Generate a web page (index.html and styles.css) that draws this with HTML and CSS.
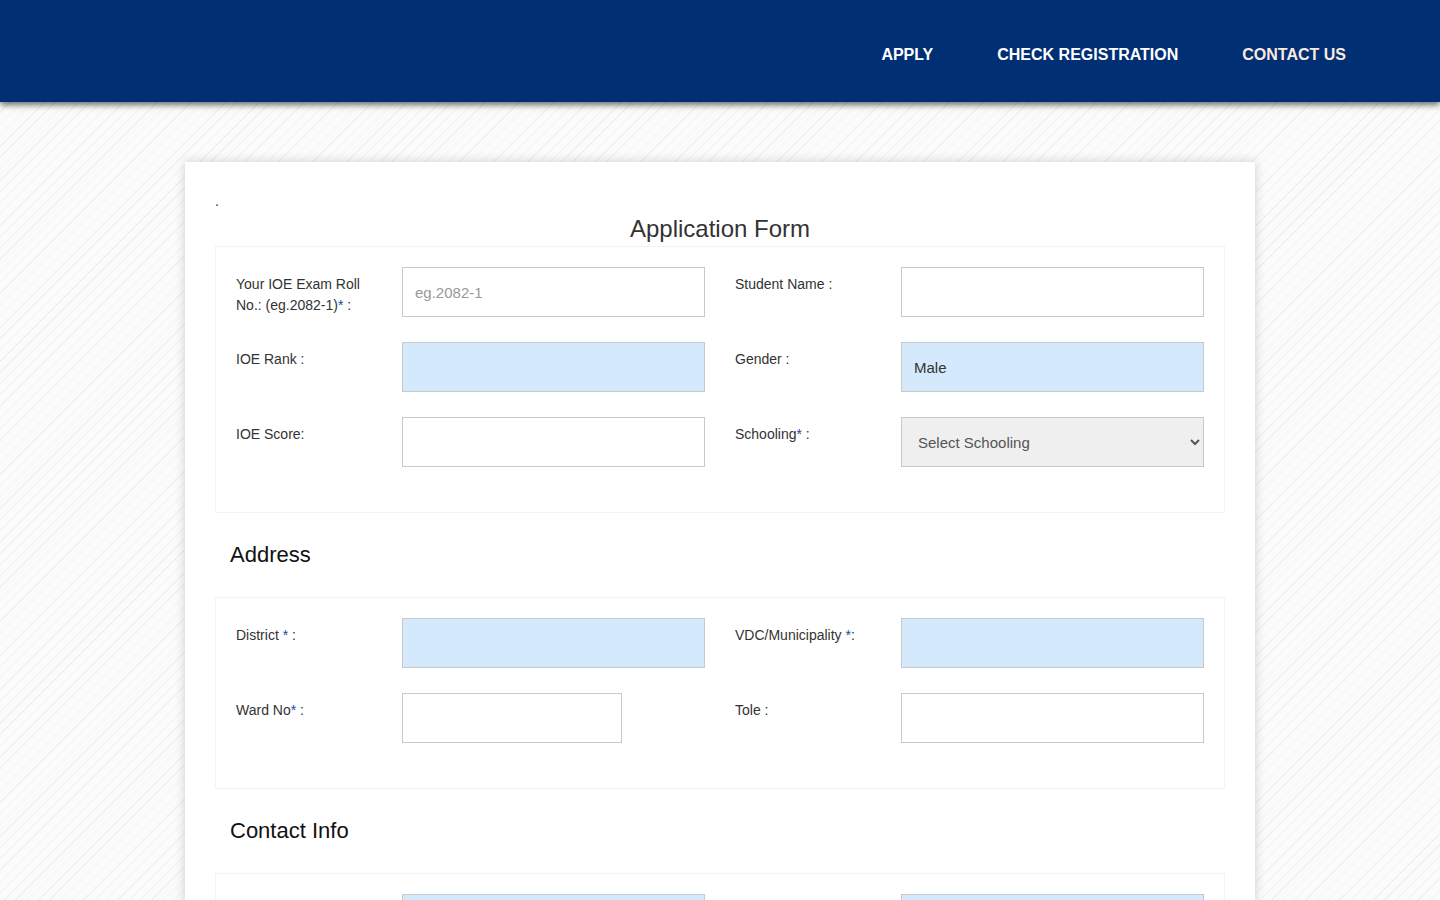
FILE: index.html
```html
<!DOCTYPE html>
<html lang="en">
<head>
    <meta charset="UTF-8">
    <meta name="viewport" content="width=device-width, initial-scale=1.0">
    <title>Application Form</title>
    <link rel="stylesheet" href="styles.css">
</head>
<body>
    <nav class="navbar">
        <div class="nav-links">
            <a href="#">APPLY</a>
            <a href="#">CHECK REGISTRATION</a>
            <a href="#" class="nav-contact">CONTACT US</a>
        </div>
    </nav>

    <main class="page">
        <div class="form-card">
            <p class="dot">.</p>
            <h2 class="form-title">Application Form</h2>

            <div class="form-section">
                <div class="form-row">
                    <div class="field">
                        <label>Your IOE Exam Roll No.: (eg.2082-1)<span class="req">*</span> :</label>
                        <input type="text" placeholder="eg.2082-1">
                    </div>
                    <div class="field">
                        <label>Student Name :</label>
                        <input type="text">
                    </div>
                </div>
                <div class="form-row">
                    <div class="field">
                        <label>IOE Rank :</label>
                        <input type="text" class="filled">
                    </div>
                    <div class="field">
                        <label>Gender :</label>
                        <input type="text" class="filled" value="Male">
                    </div>
                </div>
                <div class="form-row">
                    <div class="field">
                        <label>IOE Score:</label>
                        <input type="text">
                    </div>
                    <div class="field">
                        <label>Schooling<span class="req">*</span> :</label>
                        <select>
                            <option>Select Schooling</option>
                            <option>Government</option>
                            <option>Private</option>
                        </select>
                    </div>
                </div>
            </div>

            <h3 class="section-title">Address</h3>

            <div class="form-section">
                <div class="form-row">
                    <div class="field">
                        <label>District <span class="req">*</span> :</label>
                        <input type="text" class="filled">
                    </div>
                    <div class="field">
                        <label>VDC/Municipality <span class="req">*</span>:</label>
                        <input type="text" class="filled">
                    </div>
                </div>
                <div class="form-row">
                    <div class="field">
                        <label>Ward No<span class="req">*</span> :</label>
                        <input type="text" class="short">
                    </div>
                    <div class="field">
                        <label>Tole :</label>
                        <input type="text">
                    </div>
                </div>
            </div>

            <h3 class="section-title">Contact Info</h3>

            <div class="form-section">
                <div class="form-row">
                    <div class="field">
                        <label>Mobile No<span class="req">*</span> :</label>
                        <input type="text" class="filled">
                    </div>
                    <div class="field">
                        <label>Email :</label>
                        <input type="text" class="filled">
                    </div>
                </div>
            </div>
        </div>
    </main>
</body>
</html>
```

FILE: styles.css
```css
:root {
    --nav-bg: #002f73;
    --text-color: #333;
    --input-border: #c9c9c9;
    --filled-bg: #d5e9fc;
    --req-color: #2443a6;
    --font-family: "Liberation Sans", Arial, Helvetica, sans-serif;
}

* {
    box-sizing: border-box;
}

body {
    margin: 0;
    font-family: var(--font-family);
    color: var(--text-color);
    background-color: #fbfbfb;
    background-image: repeating-linear-gradient(135deg, #fbfbfb 0, #fbfbfb 7px, #f0f0f0 7px, #f0f0f0 8px);
}

.navbar {
    height: 102px;
    background-color: var(--nav-bg);
    box-shadow: 0 3px 6px rgba(0, 0, 0, 0.55);
    display: flex;
    justify-content: flex-end;
    align-items: center;
    padding: 8px 62px 0 0;
    position: relative;
}

.nav-links {
    display: flex;
}

.nav-links a {
    color: #fff;
    text-decoration: none;
    font-weight: bold;
    font-size: 16px;
    padding: 0 32px;
}

.nav-links a.nav-contact {
    color: #fbeadf;
}

.page {
    padding-top: 60px;
}

.form-card {
    width: 1070px;
    margin: 0 auto;
    padding: 0 30px 30px;
    background-color: #fff;
    box-shadow: 0 0 10px rgba(0, 0, 0, 0.18);
}

.dot {
    margin: 0;
    padding-top: 29px;
    font-size: 14px;
    line-height: 20px;
    height: 50px;
}

.form-title {
    margin: 0;
    text-align: center;
    font-size: 24px;
    font-weight: normal;
    line-height: 34px;
}

.form-section {
    border: 1px solid #f3f3f3;
    padding: 20px 20px 20px;
}

.form-row {
    display: flex;
    gap: 30px;
    margin-bottom: 25px;
}

.field {
    flex: 1;
    display: flex;
    align-items: flex-start;
}

.field label {
    width: 166px;
    flex-shrink: 0;
    padding-top: 7px;
    padding-right: 30px;
    font-size: 14px;
    line-height: 21px;
}

.req {
    color: var(--req-color);
}

.field input,
.field select {
    width: 303px;
    height: 50px;
    border: 1px solid var(--input-border);
    border-radius: 0;
    background-color: #fff;
    font-family: var(--font-family);
    font-size: 15px;
    color: var(--text-color);
    padding: 0 12px;
    outline: none;
}

.field input::placeholder {
    color: #999;
}

.field input.filled {
    background-color: var(--filled-bg);
}

.field input.short {
    width: 220px;
}

.field select {
    background-color: #efefef;
    color: #555;
    padding: 0 12px;
}

.section-title {
    margin: 0;
    padding: 29px 15px 29px;
    font-size: 22px;
    font-weight: normal;
    line-height: 26px;
    color: #111;
}
```
